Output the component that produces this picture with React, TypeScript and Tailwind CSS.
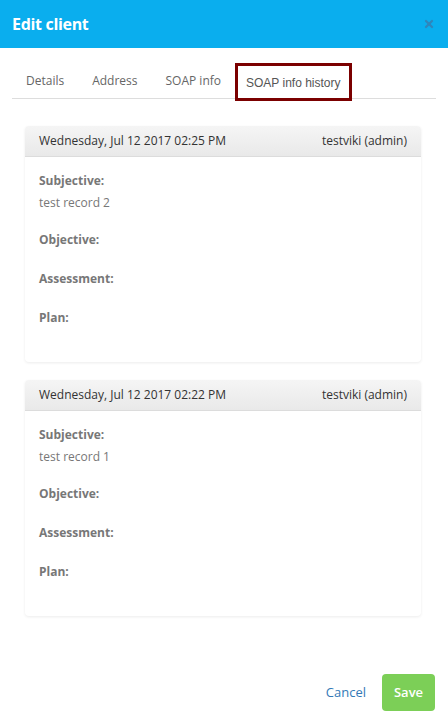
import { X } from 'lucide-react';

type SoapRecord = {
  date: string;
  author: string;
  subjective: string;
};

const RECORDS: SoapRecord[] = [
  { date: 'Wednesday, Jul 12 2017 02:25 PM', author: 'testviki (admin)', subjective: 'test record 2' },
  { date: 'Wednesday, Jul 12 2017 02:22 PM', author: 'testviki (admin)', subjective: 'test record 1' },
];

const TABS = ['Details', 'Address', 'SOAP info', 'SOAP info history'];

const HistoryCard = ({ record }: { record: SoapRecord }) => {
  return (
    <section className="overflow-hidden rounded-[4px] bg-white shadow-[0_1px_3px_rgba(0,0,0,0.08)]">
      <div className="flex h-[31px] items-center justify-between border-b border-[#dcdcdc] bg-gradient-to-b from-[#f5f5f5] to-[#e9e9e9] px-[14px] text-[12px] text-[#333]">
        <p>{record.date}</p>
        <p>{record.author}</p>
      </div>
      <div className="flex h-[205px] flex-col px-[14px] pt-[15px] text-[12px] text-[#777]">
        <p className="font-bold leading-[18px]">Subjective:</p>
        <p className="mt-[4px] leading-[18px]">{record.subjective}</p>
        <p className="mt-[19px] font-bold leading-[18px]">Objective:</p>
        <p className="mt-[21px] font-bold leading-[18px]">Assessment:</p>
        <p className="mt-[21px] font-bold leading-[18px]">Plan:</p>
      </div>
    </section>
  );
};

export default function App() {
  return (
    <div className="flex h-[728px] w-[448px] flex-col bg-white font-['Open_Sans',sans-serif]">
      <header className="flex h-[48px] shrink-0 items-center justify-between bg-[#0aaeee] pl-[12px] pr-[13px]">
        <h1 className="text-[16px] font-bold tracking-[-0.02em] text-white">Edit client</h1>
        <X className="text-[#2f86bb]" size={12} strokeWidth={4.5} />
      </header>

      <nav className="mx-[12px] mt-[15px] flex h-[36px] items-stretch border-b border-[#dddddd] text-[12px] text-[#666]">
        {TABS.map((tab, i) => {
          const active = i === TABS.length - 1;
          return (
            <div
              key={tab}
              className={
                active
                  ? 'flex items-center border-[3px] border-[#7b0000] px-[8px] pt-[1px] font-[Liberation_Sans,sans-serif] text-[12px] text-[#555] -mb-[3px]'
                  : 'flex items-center px-[14px] pt-[1px]'
              }
            >
              {tab}
            </div>
          );
        })}
      </nav>

      <main className="mt-[27px] flex flex-col gap-[18px] px-[25px] pr-[27px]">
        {RECORDS.map((r) => (
          <HistoryCard key={r.date} record={r} />
        ))}
      </main>

      <footer className="mt-auto mb-[17px] flex items-center justify-end gap-[16px] pr-[13px]">
        <button className="text-[13px] text-[#337ab7]">Cancel</button>
        <button className="h-[37px] w-[53px] rounded-[4px] bg-[#7ccf57] text-[13px] font-semibold text-white">
          Save
        </button>
      </footer>
    </div>
  );
}
